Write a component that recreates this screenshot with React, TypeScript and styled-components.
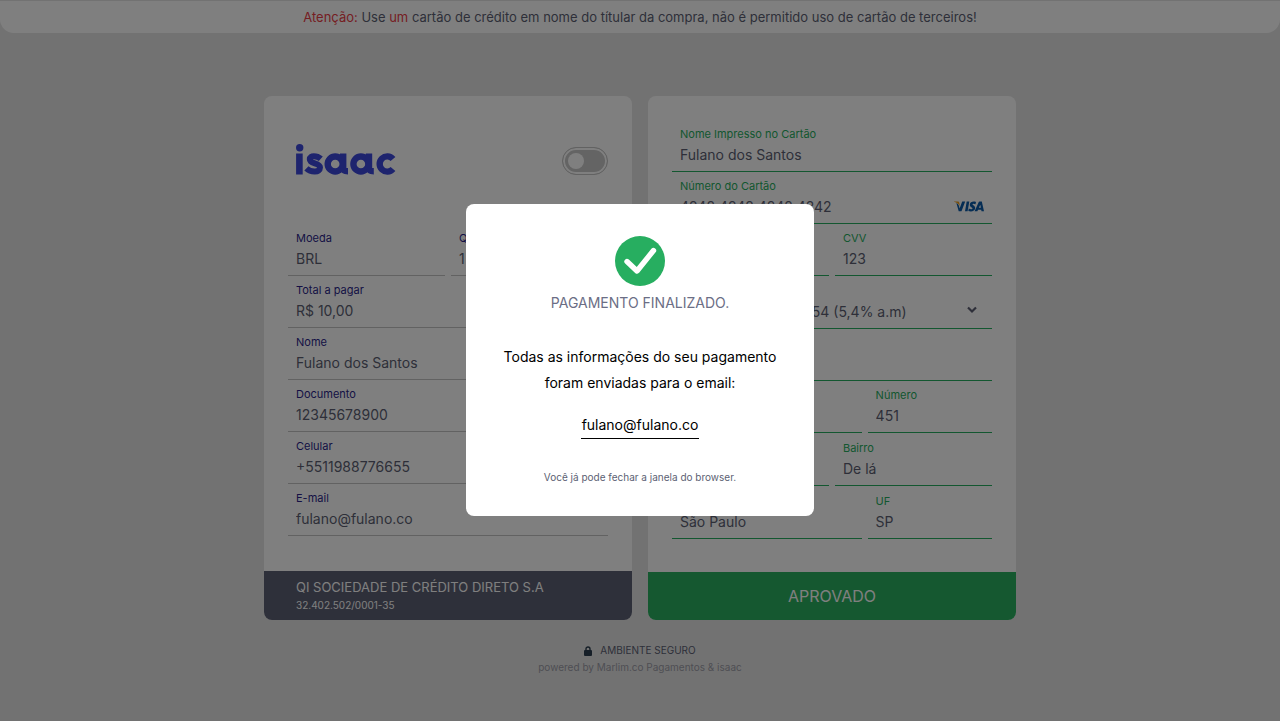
import React from "react";
import styled, { createGlobalStyle, css } from "styled-components";

const GlobalStyle = createGlobalStyle`
  * { box-sizing: border-box; }
  body { margin: 0; background: #e5e5e5; font-family: Inter, "Noto Sans", sans-serif; color: #5c5f73; }
  input, select, button { font-family: inherit; }
`;

const Page = styled.div`
  min-height: 100vh;
  display: flex;
  flex-direction: column;
  border-top: 1px solid #e5e5e5;
`;

const Notice = styled.header`
  background: #fff;
  border-radius: 0 0 14px 14px;
  min-height: 32px;
  padding: 8px 16px;
  text-align: center;
  font-size: 13px;
  line-height: 16px;
  color: #5c5f73;
`;

const Alert = styled.span`
  color: #eb3c46;
`;

const Main = styled.main`
  display: grid;
  grid-template-columns: repeat(2, minmax(0, 368px));
  justify-content: center;
  gap: 16px;
  margin-top: 63px;
`;

const Card = styled.form`
  background: #fff;
  border-radius: 8px;
  overflow: hidden;
  display: flex;
  flex-direction: column;
  min-height: 524px;
`;

const CardHead = styled.div`
  display: flex;
  align-items: center;
  justify-content: space-between;
  height: 80px;
  padding-top: 2px;
  margin: 24px 24px 0 32px;
`;

const Fields = styled.div`
  display: grid;
  grid-template-columns: repeat(10, 1fr);
  column-gap: 6px;
  padding: 24px 24px 0;
`;

const FieldBox = styled.label<{ $span: number; $green?: boolean; $tall?: boolean }>`
  grid-column: span ${(p) => p.$span};
  height: ${(p) => (p.$tall ? 53 : 52)}px;
  padding: ${(p) => (p.$tall ? "8px 8px 3px" : "7px 8px 4px")};
  border-bottom: 1px solid ${(p) => (p.$green ? "#27ae60" : "#c4c4c4")};
  color: ${(p) => (p.$green ? "#27ae60" : "#2b1f8a")};
  display: grid;
  grid-template-columns: minmax(0, 1fr) auto;
  grid-template-rows: 14px 1fr;
  align-items: center;
  font-size: 11px;
  line-height: 14px;
`;

const Caption = styled.span`
  grid-column: 1 / -1;
`;

const valueStyle = css`
  width: 100%;
  min-width: 0;
  height: 24px;
  margin: 0;
  padding: 0;
  border: 0;
  outline: 0;
  background: none;
  color: #5c5f73;
  font-size: 14px;
`;

const Value = styled.input`
  ${valueStyle}
`;

const Choice = styled.select`
  ${valueStyle}
  appearance: none;
`;

const Chevron = styled.svg`
  margin: 0 7px 3px 0;
`;

const CardFoot = styled.footer`
  margin-top: auto;
  height: 49px;
  padding: 7px 32px 0;
  background: #5c6074;
  color: #fff;
  font-size: 13px;
  line-height: 18px;
`;

const TaxId = styled.div`
  font-size: 10px;
`;

const Submit = styled.button`
  margin-top: auto;
  height: 48px;
  border: 0;
  background: #2ab060;
  color: #fff;
  font-size: 16px;
`;

const Switch = styled.input`
  appearance: none;
  margin: 0;
  width: 46px;
  height: 28px;
  padding: 5px;
  border: 1px solid #c4c4c4;
  border-radius: 14px;
  background: #c8c8c8;
  box-shadow: inset 0 0 0 2px #fff;
  display: flex;
  align-items: center;

  &::before {
    content: "";
    width: 16px;
    height: 16px;
    border-radius: 50%;
    background: #fff;
  }
`;

const Secure = styled.footer`
  margin-top: 22px;
  display: flex;
  flex-direction: column;
  align-items: center;
  font-size: 10px;
  line-height: 17px;
  color: #9d9da8;
`;

const SecureRow = styled.div`
  display: flex;
  align-items: center;
  gap: 8px;
  color: #5c5f73;
`;

const Overlay = styled.div`
  position: fixed;
  inset: 0;
  padding-bottom: 1px;
  display: flex;
  align-items: center;
  justify-content: center;
  background: rgba(0, 0, 0, 0.5);
`;

const Dialog = styled.section`
  width: 348px;
  padding: 32px 24px;
  border-radius: 8px;
  background: #fff;
  display: flex;
  flex-direction: column;
  align-items: center;
  text-align: center;
  font-size: 14px;
  color: #000;
`;

const Title = styled.h1`
  margin: 8px 0 32px;
  font-size: 14px;
  line-height: 18px;
  font-weight: 400;
  color: #6b6e85;
`;

const Message = styled.p`
  margin: 0 0 16px;
  line-height: 26px;
`;

const Email = styled.a`
  color: inherit;
  text-decoration: none;
  line-height: 26px;
  padding: 0 1px;
  border-bottom: 1px solid #000;
`;

const Hint = styled.p`
  margin: 31px 0 0;
  font-size: 10px;
  line-height: 14px;
  color: #5c5f73;
`;

const IsaacLogo = () => (
  <svg width="100" height="34" viewBox="0 0 100 34" role="img" aria-label="isaac" fill="none" stroke="#3c48dc">
    <circle cx="3.7" cy="3.7" r="3.7" fill="#3c48dc" stroke="none" />
    <path d="M3.4 9.6V30.4" strokeWidth="6.6" />
    <path d="M24.8 14.8C21 11.4 13.8 11 13.8 15.2C13.8 20.4 24 18.2 24 23.6C24 28.8 15 28.8 10.4 24.4" strokeWidth="6" />
    <circle cx="39.2" cy="20" r="7.5" strokeWidth="6.4" />
    <path d="M47.2 9.6V23.5C47.2 26 48.6 27.2 52 27.2" strokeWidth="6.4" />
    <circle cx="64.9" cy="20" r="7.5" strokeWidth="6.4" />
    <path d="M73 9.6V23.5C73 26 74.4 27.2 77.8 27.2" strokeWidth="6.4" />
    <path d="M97 15A7.6 7.6 0 1 0 97 25" strokeWidth="6.4" />
  </svg>
);

const VisaLogo = () => (
  <svg width="30" height="11" viewBox="0 0 30 11" role="img" aria-label="Visa">
    <path fill="#0a5aa8" d="M7.5 10.3H4.7L2.4 2.1C3.8 2.8 4.7 4 5.1 5.2L5.6 7.4L8.2.6H11.2ZM12.7.6H15.3L13.6 10.3H11ZM22 .9L21.5 3.2C20 2.5 18.4 2.5 18.4 3.3C18.4 4.2 21.2 4.6 21.2 7.1C21.2 10.4 17 11 14.3 10L14.8 7.6C16.4 8.4 18.5 8.4 18.5 7.4C18.5 6.4 15.8 6 15.8 3.7C15.8.6 19.5-.1 22 .9ZM25.5.6H27.8L30 10.3H27.5L27.2 8.8H24L23.4 10.3H20.6L24.5 1.4Q24.9.6 25.5.6ZM26.3 3.7L24.8 6.8H26.9Z" />
    <path fill="#f0a020" d="M0 .6H4.1Q5 .6 5.2 1.5L6.1 5.6C4.9 2.9 3 1.5 0 .8Z" />
  </svg>
);

type FieldProps = {
  label: string;
  value: string;
  span: number;
  green?: boolean;
  tall?: boolean;
  bare?: boolean;
  children?: React.ReactNode;
};

const Field = ({ label, value, span, green, tall, bare, children }: FieldProps) => (
  <FieldBox $span={span} $green={green} $tall={tall}>
    <Caption>{bare ? null : label}</Caption>
    <Value defaultValue={value} aria-label={label} />
    {children}
  </FieldBox>
);

export default function App() {
  return (
    <>
      <GlobalStyle />
      <Page>
        <Notice>
          <Alert>Atenção:</Alert> Use <Alert>um</Alert> cartão de crédito em nome do títular da compra, não é permitido uso de cartão de terceiros!
        </Notice>
        <Main>
          <Card>
            <CardHead>
              <IsaacLogo />
              <Switch type="checkbox" role="switch" aria-label="Alternar" />
            </CardHead>
            <Fields>
              <Field span={5} label="Moeda" value="BRL" />
              <Field span={5} label="Quantidade" value="1" />
              <Field span={10} label="Total a pagar" value="R$ 10,00" />
              <Field span={10} label="Nome" value="Fulano dos Santos" />
              <Field span={10} label="Documento" value="12345678900" />
              <Field span={10} label="Celular" value="+5511988776655" />
              <Field span={10} label="E-mail" value="fulano@fulano.co" />
            </Fields>
            <CardFoot>
              QI SOCIEDADE DE CRÉDITO DIRETO S.A
              <TaxId>32.402.502/0001-35</TaxId>
            </CardFoot>
          </Card>
          <Card>
            <Fields>
              <Field green span={10} label="Nome Impresso no Cartão" value="Fulano dos Santos" />
              <Field green span={10} label="Número do Cartão" value="4242 4242 4242 4242">
                <VisaLogo />
              </Field>
              <Field green span={5} label="Validade" value="12/30" />
              <Field green span={5} label="CVV" value="123" />
              <FieldBox $span={10} $green $tall>
                <Caption />
                <Choice defaultValue="1" aria-label="Parcelas">
                  <option value="1">1x R$ 10,54 = R$ 10,54 (5,4% a.m)</option>
                </Choice>
                <Chevron width="10" height="8" viewBox="0 0 10 8" aria-hidden="true">
                  <path d="M1 1.5L5 5.5L9 1.5" fill="none" stroke="#5c5f73" strokeWidth="2.2" />
                </Chevron>
              </FieldBox>
              <Field green bare span={10} label="CEP" value="" />
              <Field green bare span={6} label="Rua" value="" />
              <Field green span={4} label="Número" value="451" />
              <Field green tall span={5} label="Complemento" value="" />
              <Field green tall span={5} label="Bairro" value="De lá" />
              <Field green tall span={6} label="Cidade" value="São Paulo" />
              <Field green tall span={4} label="UF" value="SP" />
            </Fields>
            <Submit type="button">APROVADO</Submit>
          </Card>
        </Main>
        <Secure>
          <SecureRow>
            <svg width="8" height="10" viewBox="0 0 8 10" aria-hidden="true">
              <rect y="4" width="8" height="6" rx="1" fill="#2c3e50" />
              <path d="M2 5V3a2 2 0 0 1 4 0V5" fill="none" stroke="#2c3e50" strokeWidth="1.4" />
            </svg>
            AMBIENTE SEGURO
          </SecureRow>
          <div>powered by Marlim.co Pagamentos &amp; isaac</div>
        </Secure>
      </Page>
      <Overlay>
        <Dialog role="dialog" aria-modal="true" aria-labelledby="dialog-title">
          <svg width="50" height="50" viewBox="0 0 50 50" aria-hidden="true">
            <circle cx="25" cy="25" r="25" fill="#27ae60" />
            <path d="M12 25.5L22 35L38.5 14.5" fill="none" stroke="#fff" strokeWidth="5.4" strokeLinecap="round" strokeLinejoin="round" />
          </svg>
          <Title id="dialog-title">PAGAMENTO FINALIZADO.</Title>
          <Message>
            Todas as informações do seu pagamento
            <br />
            foram enviadas para o email:
          </Message>
          <Email href="mailto:fulano@fulano.co">fulano@fulano.co</Email>
          <Hint>Você já pode fechar a janela do browser.</Hint>
        </Dialog>
      </Overlay>
    </>
  );
}
